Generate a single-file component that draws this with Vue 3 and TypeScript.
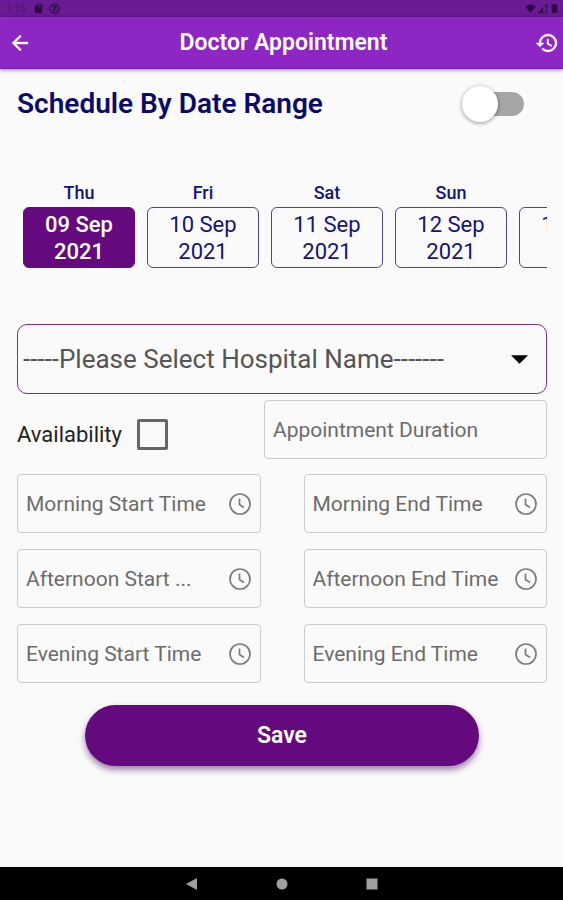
<script setup lang="ts">
import { ref } from 'vue'

interface Day {
  name: string
  date: string
  year: string
}

interface TimeField {
  id: string
  label: string
}

const days: Day[] = [
  { name: 'Thu', date: '09 Sep', year: '2021' },
  { name: 'Fri', date: '10 Sep', year: '2021' },
  { name: 'Sat', date: '11 Sep', year: '2021' },
  { name: 'Sun', date: '12 Sep', year: '2021' },
  { name: 'Mon', date: '13 Sep', year: '2021' },
]

const timeFields: TimeField[] = [
  { id: 'morning-start', label: 'Morning Start Time' },
  { id: 'morning-end', label: 'Morning End Time' },
  { id: 'afternoon-start', label: 'Afternoon Start ...' },
  { id: 'afternoon-end', label: 'Afternoon End Time' },
  { id: 'evening-start', label: 'Evening Start Time' },
  { id: 'evening-end', label: 'Evening End Time' },
]

const selectedDay = ref(0)
const byRange = ref(false)
const available = ref(false)
const hospital = ref('')
const duration = ref('')
const times = ref<Record<string, string>>({})
</script>

<template>
  <div class="screen">
    <div class="status-bar">
      <div class="status-group">
        <span class="clock">1:15</span>
        <svg class="status-icon" viewBox="0 0 24 24"><path d="M18 2h-8L4 8v12c0 1.100.9 2 2 2h12c1.100 0 2-.9 2-2V4c0-1.100-.9-2-2-2zm-6 6h-2V4h2zm3 0h-2V4h2zm3 0h-2V4h2z" /></svg>
        <svg class="status-icon" viewBox="0 0 24 24"><circle cx="12" cy="12" r="10" fill="none" stroke="currentColor" stroke-width="2.500" /><path d="M7 6h10v3l-6 5h7v3H8v-3l5-5H7z" /></svg>
      </div>
      <div class="status-group status-right">
        <svg class="status-icon" viewBox="0 0 24 24"><path d="M12 21 1 8c6-5.500 16-5.500 22 0z" /></svg>
        <svg class="status-icon" viewBox="0 0 24 24"><path d="M3 21 21 3v18z" fill="none" stroke="currentColor" stroke-width="2" /><path d="M3 21l10-10v10z" /></svg>
        <svg class="status-icon" viewBox="0 0 24 24"><path d="M6 4h3V2h6v2h3v18H6z" /></svg>
      </div>
    </div>

    <header class="app-bar">
      <button class="icon-button" type="button" aria-label="Back">
        <svg viewBox="0 0 24 24"><path d="M20 11H7.830l5.590-5.590L12 4l-8 8 8 8 1.410-1.410L7.830 13H20z" /></svg>
      </button>
      <h1>Doctor Appointment</h1>
      <button class="icon-button" type="button" aria-label="History">
        <svg viewBox="0 0 24 24"><path d="M13 3a9 9 0 0 0-9 9H1l3.890 3.890.07.14L9 12H6c0-3.870 3.130-7 7-7s7 3.130 7 7-3.130 7-7 7c-1.930 0-3.680-.79-4.940-2.060l-1.420 1.420A8.950 8.950 0 0 0 13 21a9 9 0 0 0 0-18zm-1 5v5l4.280 2.540.72-1.210-3.500-2.080V8z" /></svg>
      </button>
    </header>

    <main>
      <div class="range-row">
        <label class="range-title" for="range">Schedule By Date Range</label>
        <input id="range" v-model="byRange" class="switch" type="checkbox" role="switch" />
      </div>

      <div class="days">
        <div v-for="(day, i) in days" :key="day.date" class="day">
          <span class="day-name">{{ day.name }}</span>
          <button
            type="button"
            class="day-button"
            :class="{ selected: selectedDay === i }"
            @click="selectedDay = i"
          >
            {{ day.date }}<br />{{ day.year }}
          </button>
        </div>
      </div>

      <div class="select-box">
        <select v-model="hospital" aria-label="Hospital name">
          <option value="">-----Please Select Hospital Name-------</option>
        </select>
        <svg class="caret" viewBox="0 0 16 8"><path d="M0 0h16L8 8z" /></svg>
      </div>

      <div class="availability-row">
        <div class="availability">
          <label for="available">Availability</label>
          <input id="available" v-model="available" class="checkbox" type="checkbox" />
        </div>
        <div class="field duration">
          <input v-model="duration" type="text" placeholder="Appointment Duration" aria-label="Appointment Duration" />
        </div>
      </div>

      <div class="times">
        <label v-for="field in timeFields" :key="field.id" class="field" :for="field.id">
          <input :id="field.id" v-model="times[field.id]" type="text" :placeholder="field.label" :aria-label="field.label" />
          <svg class="clock-icon" viewBox="0 0 24 24">
            <circle cx="12" cy="12" r="10" />
            <path d="M11.500 6.500v6l4.500 3" />
          </svg>
        </label>
      </div>

      <button class="save" type="button">Save</button>
    </main>

    <nav class="nav-bar">
      <button type="button" aria-label="Navigate back">
        <svg viewBox="0 0 12 12"><path d="M11 0v12L0 6z" /></svg>
      </button>
      <button type="button" aria-label="Home">
        <svg viewBox="0 0 12 12"><circle cx="6" cy="6" r="5.500" /></svg>
      </button>
      <button type="button" aria-label="Recent apps">
        <svg viewBox="0 0 12 12"><path d="M.5.5h11v11H.5z" /></svg>
      </button>
    </nav>
  </div>
</template>

<style>
body {
  background: #fafafa;
}
</style>

<style scoped>
.screen {
  display: flex;
  flex-direction: column;
  min-height: 100vh;
  background: #fafafa;
  font-family: Roboto, "Liberation Sans", sans-serif;
}

.screen *,
.screen {
  box-sizing: border-box;
}

button,
input,
select {
  margin: 0;
  font-family: inherit;
}

svg {
  display: block;
  flex: none;
}

.status-bar {
  display: flex;
  align-items: center;
  justify-content: space-between;
  height: 17px;
  padding: 0 3px 0 6px;
  background: #691b94;
  color: #2f0b46;
}

.status-group {
  display: flex;
  align-items: center;
  gap: 5px;
}

.status-right {
  gap: 1px;
}

.clock {
  width: 22px;
  color: #4d1370;
  font-size: 10px;
}

.status-icon {
  width: 11px;
  height: 11px;
  fill: currentColor;
}

.app-bar {
  display: flex;
  align-items: center;
  justify-content: space-between;
  height: 52px;
  padding: 0 4px 0 8px;
  background: #8e26c4;
  border-bottom: 1px solid #7c1cae;
  box-shadow: 0 1px 4px rgba(0, 0, 0, 0.45);
}

.app-bar h1 {
  margin: 0;
  color: #fff;
  font-size: 23px;
  font-weight: 600;
  line-height: 28px;
}

.icon-button {
  padding: 0;
  border: 0;
  background: none;
}

.icon-button svg {
  width: 24px;
  height: 24px;
  fill: #fff;
  stroke: #fff;
  stroke-width: 0.4;
}

main {
  display: flex;
  flex: 1;
  flex-direction: column;
  padding: 16px 16px 24px 17px;
}

.range-row {
  display: flex;
  align-items: center;
  justify-content: space-between;
  height: 38px;
  padding-right: 23px;
}

.range-title {
  color: #0b0a6b;
  font-size: 28px;
  font-weight: 600;
  line-height: 36px;
}

.switch {
  position: relative;
  width: 60px;
  height: 24px;
  appearance: none;
  background: linear-gradient(#a6a6a6, #a6a6a6) right / 48px 24px no-repeat;
  border-radius: 12px;
}

.switch::before {
  position: absolute;
  top: -6px;
  left: -2px;
  width: 36px;
  height: 36px;
  border-radius: 50%;
  background: #fff;
  box-shadow: 0 1px 4px rgba(0, 0, 0, 0.4);
  content: "";
}

.switch:checked::before {
  left: 26px;
}

.days {
  display: flex;
  gap: 12px;
  margin-top: 58px;
  padding-left: 6px;
  overflow: hidden;
}

.day {
  display: flex;
  flex: none;
  flex-direction: column;
  gap: 2px;
  width: 112px;
  text-align: center;
}

.day-name {
  color: #15127a;
  font-size: 18px;
  font-weight: 500;
  line-height: 24px;
}

.day-button {
  height: 61px;
  padding: 0;
  border: 1px solid #4a4594;
  border-radius: 6px;
  background: none;
  color: #15127a;
  font-size: 22px;
  line-height: 27px;
}

.day-button.selected {
  border-color: #640a7e;
  background: #640a7e;
  color: #fff;
  font-weight: 500;
}

.select-box {
  display: flex;
  align-items: center;
  height: 70px;
  margin-top: 56px;
  padding: 0 18px 0 5px;
  border: 1px solid #7b2d96;
  border-radius: 10px;
}

.select-box select {
  flex: 1;
  min-width: 0;
  height: 100%;
  padding: 0;
  border: 0;
  appearance: none;
  background: none;
  color: #555;
  font-size: 26px;
}

.caret {
  width: 17px;
  height: 9px;
}

.availability-row {
  display: flex;
  justify-content: space-between;
  margin-top: 6px;
}

.availability {
  display: flex;
  align-items: center;
  gap: 15px;
  padding-top: 9px;
  color: #222;
  font-size: 22px;
}

.checkbox {
  width: 31px;
  height: 31px;
  appearance: none;
  border: 3px solid #666;
  border-radius: 2px;
}

.checkbox:checked {
  background: #640a7e;
}

.field {
  display: flex;
  align-items: center;
  gap: 8px;
  min-width: 0;
  height: 59px;
  padding: 0 8px;
  border: 1px solid #ccc;
  border-radius: 4px;
}

.field input {
  flex: 1;
  min-width: 0;
  height: 100%;
  padding: 0;
  border: 0;
  outline: 0;
  background: none;
  color: #222;
  font-size: 21px;
}

.field input::placeholder {
  color: #6c6c6c;
  opacity: 1;
}

.duration {
  width: 53.4%;
}

.times {
  display: grid;
  grid-template-columns: repeat(2, minmax(0, 1fr));
  gap: 16px 43px;
  margin-top: 15px;
}

.clock-icon {
  width: 24px;
  height: 24px;
  fill: none;
  stroke: #7c7c7c;
  stroke-width: 1.7;
}

.save {
  height: 61px;
  margin: 22px 68px 0;
  border: 0;
  border-radius: 31px;
  background: #640a7e;
  box-shadow: 0 4px 6px rgba(70, 10, 90, 0.5);
  color: #fff;
  font-size: 23px;
  font-weight: 600;
}

.nav-bar {
  display: flex;
  align-items: center;
  justify-content: center;
  gap: 78px;
  height: 33px;
  background: #000;
}

.nav-bar button {
  padding: 0;
  border: 0;
  background: none;
}

.nav-bar svg {
  width: 12px;
  height: 12px;
  fill: #a0a0a0;
}
</style>
